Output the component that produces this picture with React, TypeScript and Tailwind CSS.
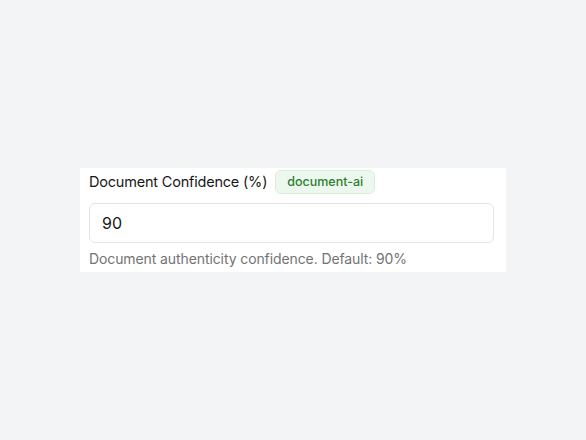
export default function App() {
  return (
    <div
      className="min-h-screen bg-[#f3f4f6] pt-[168px] pl-[80px]"
      style={{ fontFamily: 'Inter, "Noto Sans", sans-serif' }}
    >
      <div className="w-[426px] bg-white pl-[9px] pr-[12px] pt-[2px] pb-[3px]">
        <div className="flex items-center gap-[8px] h-[24px]">
          <span className="text-[14.5px] font-normal tracking-[-0.2px] text-[#171717]">Document Confidence (%)</span>
          <span className="h-[24px] px-[11px] flex items-center rounded-[6px] border border-[#d7efd9] bg-[#ecf8ee] text-[12.5px] font-medium text-[#2e7d32]">
            document-ai
          </span>
        </div>
        <input
          type="text"
          defaultValue="90"
          className="mt-[9px] block w-full h-[40px] rounded-[6px] border border-[#e2e4e8] bg-white px-[12px] text-[16px] text-[#171717] outline-none"
        />
        <p className="mt-[6px] text-[14px] leading-[20px] tracking-[-0.1px] text-[#737373]">
          Document authenticity confidence. Default: 90%
        </p>
      </div>
    </div>
  );
}
